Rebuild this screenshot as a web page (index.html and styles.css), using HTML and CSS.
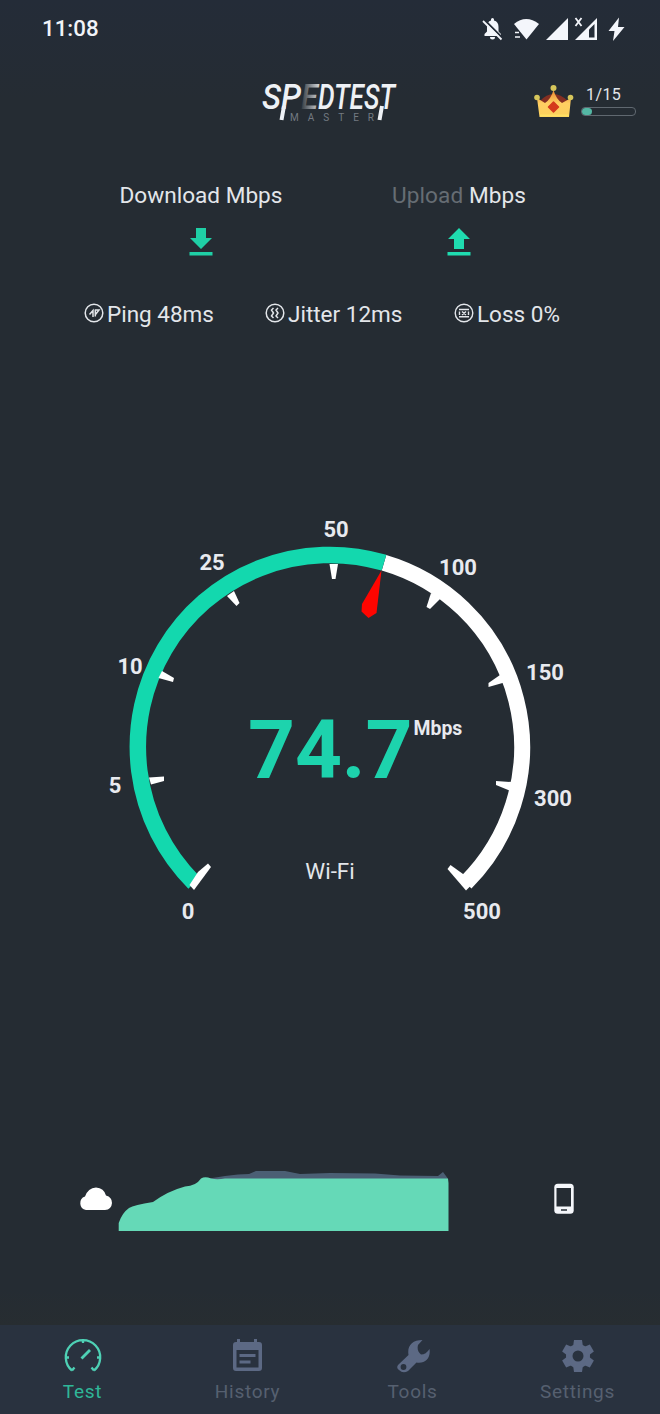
FILE: index.html
```html
<!DOCTYPE html>
<html lang="en">
<head>
    <meta charset="UTF-8">
    <meta name="viewport" content="width=device-width, initial-scale=1.0">
    <title>Speed Test Master</title>
    <link rel="stylesheet" href="styles.css">
</head>
<body>

    <div class="status-bar">
        <span class="time">11:08</span>
        <svg class="status-icons" width="150" height="30" viewBox="480 14 150 30" fill="#f4f6fb">
            <!-- Muted bell -->
            <path d="M484.500 36 V34 L487 31.500 V27 Q487 21.500 491 20.500 V19.500 a1.500 1.500 0 0 1 3 0 V20.500 Q498.500 21.500 498.500 27 V31.500 L501 34 V36 Z M490 37 h5 a2.500 2.500 0 0 1 -5 0 Z"/>
            <path d="M484.500 20 L503 38.500" stroke="#242c37" stroke-width="2"/>
            <path d="M483 21 L501.500 39.500" stroke="#f4f6fb" stroke-width="1.800"/>
            <!-- Wifi -->
            <path d="M514 24 Q526 14 539 24 L526.500 39.500 L520 31.500 Z"/>
            <path d="M515 32.500 h4 M515 37 h5" stroke="#f4f6fb" stroke-width="1.600"/>
            <!-- Signals -->
            <path d="M568 18 V40 H546 Z"/>
            <path d="M597 18 V40 H575 Z"/>
            <path d="M589 29.500 L594.500 24 V37.500 H589 Z" fill="#242c37"/>
            <path d="M575.500 18 L581.500 26 M581.500 18 L575.500 26" stroke="#f4f6fb" stroke-width="1.800"/>
            <path d="M619 17.500 L608.500 31 H614.500 L613 41 L624.500 27 H618 Z"/>
        </svg>
    </div>

    <div class="header">
        <svg class="logo" width="150" height="52" viewBox="258 74 150 52">
            <defs>
                <linearGradient id="fade" x1="0" x2="1">
                    <stop offset="0" stop-color="#30383f"/>
                    <stop offset="1" stop-color="#d5d9de"/>
                </linearGradient>
            </defs>
            <g class="logo-text">
                <text x="262" y="109" textLength="39" lengthAdjust="spacingAndGlyphs">SP</text>
                <text x="301" y="109" textLength="17" lengthAdjust="spacingAndGlyphs" fill="url(#fade)">E</text>
                <text x="318" y="109" textLength="77" lengthAdjust="spacingAndGlyphs">DTEST</text>
            </g>
            <!-- Long stems of the wordmark -->
            <path d="M284 106 L281.500 120 M382 106 L379.500 120" stroke="#eef1f5" stroke-width="4"/>
            <text class="logo-sub" x="290" y="121" textLength="84">MASTER</text>
        </svg>
        <div class="premium">
            <svg width="42" height="36" viewBox="533 84 42 36">
                <defs>
                    <linearGradient id="gold" x1="0" x2="0" y1="0" y2="1">
                        <stop offset="0" stop-color="#e8862e"/>
                        <stop offset=".5" stop-color="#ffcf62"/>
                        <stop offset="1" stop-color="#fbd15c"/>
                    </linearGradient>
                </defs>
                <path d="M540 101 Q553 87 568 101 L565 110 H543 Z" fill="#842f22"/>
                <path d="M537 98 L545 103 Q551 99 553.500 90 Q556 99 562 103 L571 98 L569 117 H539.500 Z" fill="url(#gold)"/>
                <path d="M553.500 102 L558.500 107 L553.500 112 L548.500 107 Z" fill="#d43a1d" stroke="#d43a1d" stroke-width="1.500" stroke-linejoin="round"/>
                <path d="M540 115.500 H569" stroke="#ffe064" stroke-width="2"/>
                <circle cx="553.500" cy="88" r="3" fill="#d6c65b"/>
                <circle cx="537" cy="97.500" r="2.800" fill="#d6c65b"/>
                <circle cx="570.500" cy="97.500" r="2.800" fill="#d6c65b"/>
            </svg>
            <div class="quota">
                <span>1/15</span>
                <div class="quota-bar"><div class="quota-fill"></div></div>
            </div>
        </div>
    </div>

    <div class="speeds">
        <div class="speed download">
            <div>Download Mbps</div>
            <svg width="24" height="28" viewBox="0 0 24 28" fill="#1fd0a6">
                <path d="M7 0 H17 V10 H23 L12 21 L1 10 H7 Z"/>
                <path d="M.5 24 H23.500 V27.500 H.5 Z"/>
            </svg>
        </div>
        <div class="speed upload">
            <div><span class="dim">Upload</span> Mbps</div>
            <svg width="24" height="28" viewBox="0 0 24 28" fill="#1fdcb0">
                <path d="M12 0 L23 11 H17 V21 H7 V11 H1 Z"/>
                <path d="M.5 24 H23.500 V27.500 H.5 Z"/>
            </svg>
        </div>
    </div>

    <div class="stats">
        <div class="stat ping">
            <svg width="20" height="20" viewBox="0 0 20 20" fill="none" stroke="#e3e6ea" stroke-width="1.500">
                <circle cx="10" cy="10" r="8.800"/>
                <path d="M5.500 11.500 L9 7.500 V14 M11.300 13.500 V6.500 M11 7 H15 L11.500 11.500"/>
            </svg>
            <span>Ping 48ms</span>
        </div>
        <div class="stat jitter">
            <svg width="20" height="20" viewBox="0 0 20 20" fill="none" stroke="#e3e6ea" stroke-width="1.500">
                <circle cx="10" cy="10" r="8.800"/>
                <path d="M8.500 5 L6.500 7 L8.500 10 L6.500 13 L8.500 15 M13 5 L11 7 L13 10 L11 13 L13 15"/>
            </svg>
            <span>Jitter 12ms</span>
        </div>
        <div class="stat loss">
            <svg width="20" height="20" viewBox="0 0 20 20" fill="none" stroke="#e3e6ea" stroke-width="1.400">
                <circle cx="10" cy="10" r="8.800"/>
                <path d="M5 6.500 H15 M5 13.800 H15 M5.500 8.500 V12 M14.500 8.500 V12 M8 8.500 L12 12 M12 8.500 L8 12"/>
            </svg>
            <span>Loss 0%</span>
        </div>
    </div>

    <div class="gauge">
        <svg width="660" height="440" viewBox="0 500 660 440">
            <!-- Remaining part, then the measured part -->
            <path d="M384 562.700 A192 192 0 0 1 465.800 882.800" fill="none" stroke="#fff" stroke-width="16"/>
            <path d="M194.200 882.800 A192 192 0 0 1 384 562.700" fill="none" stroke="#13d8ae" stroke-width="16.500"/>
            <g fill="#fff">
                <path d="M189.500 885 L194 890 L211 867 L208 863.500 L198 872 Z"/>
                <path d="M149 777.500 L164 776.500 V781 L151 784.500 Z"/>
                <path d="M162 671 L174 678 L173 682 L158.500 678 Z"/>
                <path d="M227 596 L234 591 L239.500 603 L236.500 606 Z"/>
                <path d="M329.500 564 H338 L335.500 579 H332 Z"/>
                <path d="M431 593 L442 597 L430 609 L426.500 607 Z"/>
                <path d="M500 675 L506 682 L488.500 687 V683 Z"/>
                <path d="M512 782 L513 792 L496 785 V781 Z"/>
                <path d="M466 890.500 L447.500 869 L450.500 865 L463 874 L471.500 885 Z"/>
            </g>
            <path d="M381.500 570.500 L376.500 613 L368.500 618 L361.500 611.500 L362 604 Z" fill="#ff0500"/>
            <g class="gauge-labels">
                <text x="188" y="919">0</text>
                <text x="115" y="793">5</text>
                <text x="130" y="673.500">10</text>
                <text x="212" y="570">25</text>
                <text x="336" y="537">50</text>
                <text x="458" y="574.500">100</text>
                <text x="545" y="680">150</text>
                <text x="553" y="805.500">300</text>
                <text x="482" y="919">500</text>
            </g>
            <text class="value" x="248" y="778" textLength="164.500">74.7</text>
            <text class="unit" x="413.500" y="735">Mbps</text>
            <text class="network" x="330" y="878.500">Wi-Fi</text>
        </svg>
    </div>

    <div class="graph">
        <svg width="34" height="24" viewBox="0 0 34 24" fill="#fff">
            <path d="M7 23 A7 7 0 0 1 6 9.500 Q9 1 17 .5 Q25 1 27 8.500 Q33 10 33 16 Q32.500 22.500 26 23 Z"/>
        </svg>
        <svg class="chart" width="332" height="64" viewBox="118 1168 332 64">
            <path d="M200 1180 L225 1176 L238 1174.500 L249 1174 L256 1171 L285 1171 L300 1174 L330 1173 L375 1173.500 L400 1175.500 L438 1176 L443 1172 L447.500 1178 V1182 H200 Z" fill="#4b5f74"/>
            <path d="M118.700 1231 V1223 Q122 1213 129 1208 Q134 1205 153 1202 Q168 1191 185 1186.500 Q196 1186 201 1178.500 Q205 1176 211 1178.500 Q217 1180 225 1178.500 H448 L448.500 1183 V1231 Z" fill="#65d9b7"/>
        </svg>
        <svg class="phone" width="20" height="32" viewBox="0 0 20 32">
            <rect x=".3" y=".8" width="19.400" height="30" rx="3.500" fill="#f5f7fb"/>
            <path d="M2.500 5 H17 V23.500 H2.500 Z" fill="#252c33"/>
            <path d="M7 27 H13" stroke="#252c33" stroke-width="1.500"/>
        </svg>
    </div>

    <div class="nav">
        <a class="active">
            <svg width="40" height="36" viewBox="0 0 40 36" fill="none" stroke="#4ed1b5" stroke-width="2.300">
                <path d="M9 33.500 A17.200 17.200 0 1 1 31 33.500 M9 33.500 L11.500 30.500 M31 33.500 L28.500 30.500 M3 20.500 H6 M37 20.500 H34 M20 3.500 V6"/>
                <path d="M18.500 21.500 L27 13" stroke-width="2.800"/>
            </svg>
            <span>Test</span>
        </a>
        <a>
            <svg width="40" height="36" viewBox="0 0 40 36" fill="#5c6984">
                <path fill-rule="evenodd" d="M9 2 H12 V5 H26 V2 H29 V5 H31 Q34 5 34 8 V31 Q34 34 31 34 H8 Q5 34 5 31 V8 Q5 5 8 5 H9 Z M8.500 13 V30.500 H30.500 V13 Z"/>
                <path d="M11.500 17 H27.500 V20 H11.500 Z M11.500 23.500 H22.500 V26.500 H11.500 Z"/>
            </svg>
            <span>History</span>
        </a>
        <a>
            <svg width="40" height="36" viewBox="0 0 40 36">
                <path d="M5 28 L15.500 18 C14 9 19 3 29.500 3 L25 8 Q23.500 14 28 17.500 Q33 17.500 36.500 12 C38 21 32 27 23.500 25.500 L15 34 Q10 37 6 33 Q3 31 5 28 Z" fill="#5c6984"/>
                <circle cx="10.500" cy="30" r="2.900" fill="#29323f"/>
            </svg>
            <span>Tools</span>
        </a>
        <a>
            <svg width="40" height="36" viewBox="0 0 40 36">
                <g fill="#5c6984">
                    <circle cx="20" cy="19" r="12"/>
                    <path id="tooth" d="M16 3 H24 L25 10 H15 Z"/>
                    <use href="#tooth" transform="rotate(60 20 19)"/>
                    <use href="#tooth" transform="rotate(120 20 19)"/>
                    <use href="#tooth" transform="rotate(180 20 19)"/>
                    <use href="#tooth" transform="rotate(240 20 19)"/>
                    <use href="#tooth" transform="rotate(300 20 19)"/>
                </g>
                <circle cx="20" cy="19" r="5.500" fill="#29323f"/>
            </svg>
            <span>Settings</span>
        </a>
    </div>

</body>
</html>
```
FILE: styles.css
```css
/* General Styles */
* {
    box-sizing: border-box;
}
body {
    margin: 0;
    height: 1414px;
    display: flex;
    flex-direction: column;
    font-family: Roboto, "Liberation Sans", sans-serif;
    background: linear-gradient(#242c38, #252c33 100px, #252c33 1290px, #272d31 1325px);
    color: #e3e6ea;
    overflow: hidden;
}
svg {
    display: block;
    flex-shrink: 0;
}

/* Status bar */
.status-bar {
    height: 58px;
    display: flex;
    justify-content: space-between;
    align-items: center;
    padding: 0 30px 0 42px;
}
.time {
    font-size: 22.3px;
    font-weight: 500;
    color: #f1f3f8;
    padding-bottom: 2px;
}

/* Header */
.header {
    height: 112px;
    display: flex;
    align-items: flex-start;
    padding: 16px 24px 0 258px;
}
.logo {
    overflow: visible;
}
.logo-text {
    font-size: 35px;
    font-weight: 500;
    font-style: italic;
    fill: #eef1f5;
}
.logo-sub {
    font-size: 10px;
    fill: #737a81;
}
.premium {
    display: flex;
    margin: 10px 0 0 125px;
    gap: 6px;
}
.quota {
    width: 55px;
    font-size: 16px;
    line-height: 20px;
    letter-spacing: 0.4px;
    padding-top: 1px;
}
.quota span {
    padding-left: 5px;
}
.quota-bar {
    height: 9px;
    margin-top: 2px;
    border: 1px solid #606870;
    border-radius: 4px;
}
.quota-fill {
    width: 10px;
    height: 7px;
    border-radius: 4px;
    background: #54b7a4;
}

/* Download and upload */
.speeds {
    height: 125px;
    display: flex;
    padding: 11.5px 0 0 101px;
}
.speed {
    width: 200px;
    display: flex;
    flex-direction: column;
    align-items: center;
    gap: 18.5px;
    font-size: 22.6px;
    line-height: 28px;
    white-space: nowrap;
}
.upload {
    margin-left: 58px;
    letter-spacing: 0.1px;
}
.dim {
    color: #666d73;
}

/* Ping, jitter, loss */
.stats {
    height: 205px;
    display: flex;
    padding: 5px 0 0 84px;
    font-size: 22.5px;
    line-height: 28px;
}
.stat {
    display: flex;
    align-items: flex-start;
    gap: 3px;
}
.stat svg {
    margin-top: 3px;
}
.ping {
    width: 181px;
}
.jitter {
    width: 189px;
}

/* Gauge */
.gauge {
    height: 440px;
}
.gauge-labels {
    font-size: 22px;
    font-weight: 700;
    fill: #e8eaef;
    text-anchor: middle;
}
.value {
    font-size: 82px;
    font-weight: 700;
    fill: #1dd3ad;
}
.unit {
    font-size: 19.4px;
    font-weight: 700;
    fill: #e8eaef;
}
.network {
    font-size: 22.4px;
    fill: #e3e6ea;
    text-anchor: middle;
}

/* Traffic graph */
.graph {
    flex: 1;
    display: flex;
    align-items: flex-start;
    padding: 247px 0 0 79px;
}
.chart {
    margin: -19px 0 0 5px;
}
.phone {
    margin: -4px 0 0 104px;
}

/* Bottom navigation */
.nav {
    height: 89px;
    display: flex;
    background: #29323f;
}
.nav a {
    flex: 1;
    display: flex;
    flex-direction: column;
    align-items: center;
    padding-top: 12px;
    font-size: 19px;
    line-height: 24px;
    letter-spacing: 0.7px;
    color: #566070;
}
.nav span {
    margin-top: 7px;
}
.nav .active {
    color: #2fb798;
}
```
